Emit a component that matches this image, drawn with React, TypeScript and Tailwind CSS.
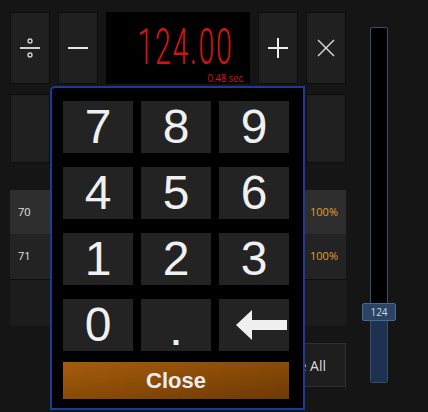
import React from "react";

const F = { fontFamily: '"Liberation Sans", Arial, sans-serif' };

function TopBtn({ children }: { children: React.ReactNode }) {
  return (
    <div className="w-[40px] h-[72px] bg-[#202020] border border-[#0d0d0d] flex items-center justify-center">
      {children}
    </div>
  );
}

function Key({ children, className = "" }: { children: React.ReactNode; className?: string }) {
  return (
    <div className={`h-[52px] bg-[#232323] flex items-center justify-center text-[48px] leading-none text-[#f0f0f0] ${className}`} style={F}>
      {children}
    </div>
  );
}

export default function App() {
  return (
    <div className="relative w-[428px] h-[412px] bg-[#151515] overflow-hidden flex" style={F}>
      <div className="flex flex-col pl-[10px] pt-[12px] w-[346px]">
        <div className="flex gap-[8px]">
          <TopBtn>
            <svg width="24" height="24" viewBox="0 0 24 24">
              <circle cx="12" cy="5" r="2" fill="none" stroke="#cfcfcf" strokeWidth="1.4" />
              <line x1="2" y1="12" x2="22" y2="12" stroke="#cfcfcf" strokeWidth="2" />
              <circle cx="12" cy="19" r="2" fill="none" stroke="#cfcfcf" strokeWidth="1.4" />
            </svg>
          </TopBtn>
          <TopBtn>
            <svg width="24" height="24" viewBox="0 0 24 24">
              <line x1="2" y1="12" x2="22" y2="12" stroke="#e6e6e6" strokeWidth="2" />
            </svg>
          </TopBtn>
          <div className="relative w-[144px] h-[72px] bg-black">
            <div
              className="absolute right-[16px] top-[19px] text-[50px] leading-[32px] font-light text-[#d41414] origin-right scale-x-[0.57]"
              style={{ fontFamily: 'Roboto, "DejaVu Sans", sans-serif', letterSpacing: "3px" }}
            >
              124.00
            </div>
            <div className="absolute right-[7px] bottom-[1px] text-[10px] leading-none text-[#d41414] tracking-tight" style={{ fontFamily: '"Open Sans", sans-serif' }}>
              0.48 sec
            </div>
          </div>
          <TopBtn>
            <svg width="24" height="24" viewBox="0 0 24 24">
              <line x1="2" y1="12" x2="22" y2="12" stroke="#ececec" strokeWidth="2" />
              <line x1="12" y1="2" x2="12" y2="22" stroke="#ececec" strokeWidth="2" />
            </svg>
          </TopBtn>
          <TopBtn>
            <svg width="24" height="24" viewBox="0 0 24 24">
              <line x1="4" y1="4" x2="20" y2="20" stroke="#d8d8d8" strokeWidth="1.4" />
              <line x1="20" y1="4" x2="4" y2="20" stroke="#d8d8d8" strokeWidth="1.4" />
            </svg>
          </TopBtn>
        </div>
        <div className="flex justify-between mt-[10px] h-[69px]">
          <div className="w-[40px] bg-[#202020] border border-[#0d0d0d]" />
          <div className="w-[40px] bg-[#202020] border border-[#0d0d0d]" />
        </div>
        <div className="mt-[27px] flex flex-col" style={{ fontFamily: '"Open Sans", sans-serif' }}>
          <div className="h-[44px] bg-[#2e2e2e] flex items-center justify-between px-[8px] text-[11px]">
            <span className="text-[#e0e0e0]">70</span>
            <span className="text-[#e0a030]">100%</span>
          </div>
          <div className="h-[46px] bg-[#232323] border-b border-[#0e0e0e] flex items-center justify-between px-[8px] text-[11px]">
            <span className="text-[#e0e0e0]">71</span>
            <span className="text-[#e0a030]">100%</span>
          </div>
          <div className="h-[46px] bg-[#1c1c1c]" />
        </div>
        <div className="mt-[17px] flex justify-end">
          <div className="w-[120px] h-[44px] bg-[#1e1e1e] border border-[#303030] flex items-center justify-end pr-[19px] text-[14px] whitespace-nowrap text-[#dcdcdc]" style={{ fontFamily: '"Open Sans", sans-serif' }}>
            Release All
          </div>
        </div>
      </div>

      <div className="ml-[24px] mt-[27px] relative w-[18px] h-[356px] bg-black border border-[#34506e] rounded-[2px] flex flex-col justify-end">
        <div className="h-[71px] bg-[#1d3150] rounded-b-[2px]" />
        <div className="absolute left-[-9px] top-[275px] w-[34px] h-[18px] bg-[#2a4466] border border-[#48698c] rounded-[2px] flex items-center justify-center text-[10px] text-[#d0d8e0]" style={{ fontFamily: '"Open Sans", sans-serif' }}>
          124
        </div>
      </div>

      <div className="absolute left-[50px] top-[86px] w-[255px] h-[324px] bg-black border-2 border-[#1c3a98] rounded-tl-[5px] pl-[11px] pt-[13px] flex flex-col">
        <div className="grid grid-cols-[70px_70px_70px] gap-x-[8px] gap-y-[14px]">
          <Key>7</Key>
          <Key>8</Key>
          <Key>9</Key>
          <Key>4</Key>
          <Key>5</Key>
          <Key>6</Key>
          <Key>1</Key>
          <Key>2</Key>
          <Key>3</Key>
          <Key>0</Key>
          <Key><span className="text-[34px] font-bold leading-none pt-[16px]">.</span></Key>
          <Key className="pl-[14px]">
            <svg width="51" height="30" viewBox="0 0 51 30">
              <polygon points="0,15 16,0 16,10 51,10 51,20 16,20 16,30" fill="#f0f0f0" />
            </svg>
          </Key>
        </div>
        <div className="mt-[11px] w-[226px] h-[37px] bg-gradient-to-br from-[#a65d0c] to-[#6e3904] flex items-center justify-center text-[22px] font-bold text-[#ececec]">
          Close
        </div>
      </div>
    </div>
  );
}
